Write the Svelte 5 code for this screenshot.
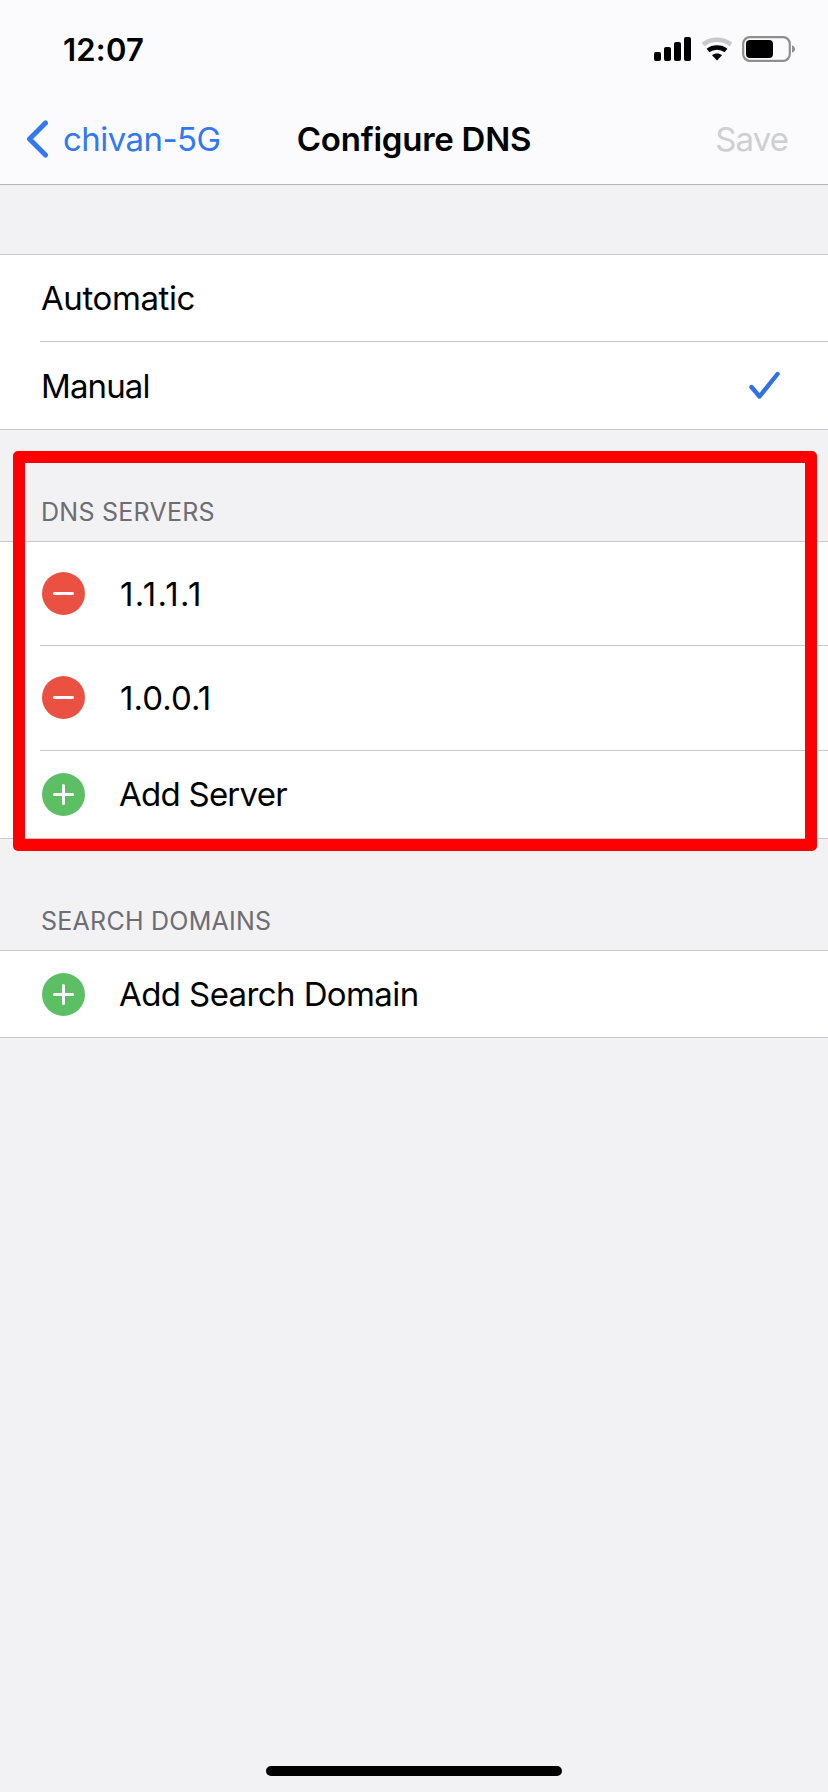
<script>
  const dnsServers = [
    { address: '1.1.1.1', spacing: 1.3 },
    { address: '1.0.0.1', spacing: 0.05 }
  ];
</script>

<div class="screen">
  <header class="bar">
    <div class="status">
      <span class="time">12:07</span>
      <div class="indicators">
        <svg class="signal" width="38" height="24" viewBox="0 0 38 24" fill="#000">
          <rect x="0" y="15" width="7" height="9" rx="2"/>
          <rect x="10" y="10" width="7" height="14" rx="2"/>
          <rect x="20" y="5" width="7" height="19" rx="2"/>
          <rect x="30" y="0" width="7" height="24" rx="2"/>
        </svg>
        <svg class="wifi" width="32" height="24" viewBox="0 0 32 24" fill="none">
          <path d="M2 7.5C10 1 22 1 30 7.5" stroke="#c9c9c9" stroke-width="4.5"/>
          <path d="M7 13.5C12 9.5 20 9.5 25 13.5" stroke="#000" stroke-width="4.5"/>
          <path d="M11 18.2C13.8 16 18.2 16 21 18.2L16 23.5Z" fill="#000"/>
        </svg>
        <svg class="battery" width="54" height="26" viewBox="0 0 54 26" fill="none">
          <rect x="1.2" y="1.2" width="46.6" height="23.6" rx="6.5" stroke="#8e8e8e" stroke-width="2.2"/>
          <rect x="4" y="4" width="27" height="18" rx="4" fill="#000"/>
          <path d="M50 9.5C52 10 53 11.5 53 13C53 14.5 52 16 50 16.5Z" fill="#8e8e8e"/>
        </svg>
      </div>
    </div>
    <nav class="nav">
      <div class="back">
        <svg width="24" height="38" viewBox="0 0 24 38" fill="none">
          <path d="M20.5 3L4.5 19L20.5 35" stroke="#3478f0" stroke-width="5" stroke-linecap="round" stroke-linejoin="round"/>
        </svg>
        <span>chivan-5G</span>
      </div>
      <h1>Configure DNS</h1>
      <span class="save">Save</span>
    </nav>
  </header>

  <section class="group first">
    <div class="row plain auto"><span>Automatic</span></div>
    <div class="row plain manual sep">
      <span>Manual</span>
      <svg class="check" width="32" height="30" viewBox="0 0 32 30" fill="none">
        <path d="M3.5 16L11.5 25.5L29.5 3" stroke="#3072e4" stroke-width="4.4" stroke-linecap="round" stroke-linejoin="round"/>
      </svg>
    </div>
  </section>

  <h2 class="caption">DNS SERVERS</h2>
  <section class="group">
    {#each dnsServers as server, i}
      <div class="row icon-row tall" class:sep={i > 0}>
        <span class="dot remove"><i></i></span>
        <span class="server" style="letter-spacing: {server.spacing}px">{server.address}</span>
      </div>
    {/each}
    <div class="row icon-row add-server sep">
      <span class="dot add"><i></i><i class="v"></i></span>
      <span class="label">Add Server</span>
    </div>
  </section>

  <h2 class="caption">SEARCH DOMAINS</h2>
  <section class="group">
    <div class="row icon-row domain">
      <span class="dot add"><i></i><i class="v"></i></span>
      <span>Add Search Domain</span>
    </div>
  </section>

  <div class="highlight"></div>
  <div class="home"></div>
</div>

<style>
  :global(body) {
    margin: 0;
  }
  .screen {
    position: relative;
    width: 828px;
    height: 1792px;
    overflow: hidden;
    background: #f2f2f5;
    font-family: Inter, "Liberation Sans", sans-serif;
    color: #000;
  }
  .bar {
    height: 185px;
    box-sizing: border-box;
    background: #fbfbfd;
    border-bottom: 1px solid #b3b3bb;
    display: flex;
    flex-direction: column;
  }
  .status {
    height: 98px;
    box-sizing: border-box;
    padding: 2px 32px 0 63px;
    display: flex;
    align-items: center;
    justify-content: space-between;
  }
  .time {
    font-size: 31px;
    font-weight: 600;
    letter-spacing: 0.2px;
  }
  .indicators {
    display: flex;
    align-items: center;
    gap: 9px;
  }
  .nav {
    position: relative;
    height: 86px;
    display: flex;
    align-items: center;
    justify-content: space-between;
    padding: 0 40px 2px 25px;
    font-size: 33px;
  }
  .back {
    display: flex;
    align-items: center;
    gap: 14px;
    color: #3478f0;
    letter-spacing: -0.55px;
  }
  .nav h1 {
    position: absolute;
    left: 0;
    right: 0;
    margin: 0;
    text-align: center;
    font-size: 33px;
    font-weight: 600;
    letter-spacing: -0.25px;
    pointer-events: none;
  }
  .save {
    color: #cfcfd2;
    letter-spacing: -0.9px;
  }
  .group {
    background: #fff;
    border-top: 1px solid #c9c9cd;
    border-bottom: 1px solid #c9c9cd;
    font-size: 33px;
    letter-spacing: -0.6px;
  }
  .group.first {
    margin-top: 69px;
  }
  .row {
    position: relative;
    display: flex;
    align-items: center;
    height: 87px;
    padding-left: 41px;
  }
  .row.auto {
    height: 86px;
    letter-spacing: -0.4px;
  }
  .row.manual {
    height: 88px;
    letter-spacing: -0.9px;
    padding-top: 1px;
    box-sizing: border-box;
  }
  .row.tall {
    height: 105px;
  }
  .row.tall:first-child {
    height: 103px;
  }
  .row.add-server {
    height: 88px;
  }
  .row.domain {
    height: 86px;
  }
  .row.sep::before {
    content: "";
    position: absolute;
    top: 0;
    left: 40px;
    right: 0;
    height: 1px;
    background: #c9c9cd;
  }
  .plain {
    justify-content: space-between;
    padding-right: 48px;
  }
  .icon-row {
    gap: 34px;
    padding-left: 42px;
  }
  .server {
    margin-left: 1px;
  }
  .label {
    letter-spacing: -0.75px;
  }
  .dot {
    position: relative;
    flex: none;
    width: 43px;
    height: 43px;
    border-radius: 50%;
  }
  .dot i {
    position: absolute;
    left: 11px;
    top: 20px;
    width: 21px;
    height: 3px;
    border-radius: 1.5px;
    background: #fff;
  }
  .dot i.v {
    left: 20px;
    top: 11px;
    width: 3px;
    height: 21px;
  }
  .remove {
    background: #eb5143;
  }
  .add {
    background: #5dbf64;
  }
  .caption {
    height: 111px;
    box-sizing: border-box;
    margin: 0;
    padding: 0 0 14px 41px;
    font-size: 25px;
    font-weight: 400;
    color: #6d6d72;
    display: flex;
    align-items: flex-end;
    letter-spacing: 0.25px;
  }
  .highlight {
    position: absolute;
    left: 13px;
    top: 451px;
    width: 804px;
    height: 400px;
    box-sizing: border-box;
    border: 12px solid #fe0000;
    border-radius: 5px;
  }
  .home {
    position: absolute;
    left: 266px;
    top: 1766px;
    width: 296px;
    height: 10px;
    border-radius: 5px;
    background: #000;
  }
</style>
